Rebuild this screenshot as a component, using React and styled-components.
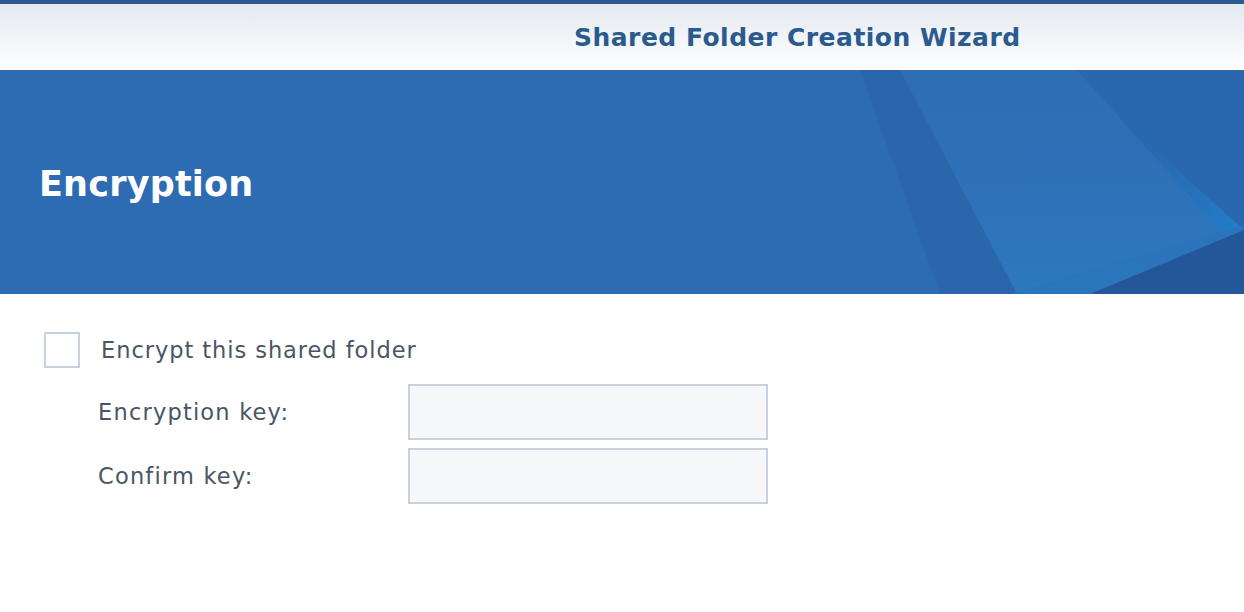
import React from "react";
import styled, { createGlobalStyle } from "styled-components";

const Global = createGlobalStyle`
  html, body {
    margin: 0;
    padding: 0;
    background: #ffffff;
    font-family: "DejaVu Sans", Verdana, sans-serif;
  }
`;

const Page = styled.div`
  width: 1244px;
  height: 612px;
  overflow: hidden;
  background: #ffffff;
  display: flex;
  flex-direction: column;
`;

const TitleBar = styled.header`
  height: 66px;
  border-top: 4px solid #2a5a8e;
  background: linear-gradient(to bottom, #e3e9f1, #ffffff);
  display: flex;
  align-items: center;
  padding-left: 574px;
`;

const WizardTitle = styled.h1`
  margin: 0;
  font-size: 25px;
  font-weight: bold;
  color: #2a5a8e;
  letter-spacing: 0.48px;
`;

const Banner = styled.section`
  position: relative;
  height: 224px;
  background: #2d6cb2;
  display: flex;
  align-items: center;
  padding-left: 39px;
  overflow: hidden;
`;

const BannerArt = styled.svg`
  position: absolute;
  inset: 0;
  width: 100%;
  height: 100%;
`;

const StepTitle = styled.h2`
  position: relative;
  margin: 4px 0 0;
  font-size: 35px;
  font-weight: bold;
  color: #ffffff;
  letter-spacing: 0.2px;
`;

const Body = styled.main`
  padding: 38px 0 0 44px;
  display: flex;
  flex-direction: column;
`;

const CheckRow = styled.label`
  display: flex;
  align-items: center;
  gap: 21px;
  margin-bottom: 16px;
`;

const Box = styled.span`
  width: 32px;
  height: 32px;
  border: 2px solid #c8d2de;
  background: #ffffff;
`;

const Text = styled.span`
  font-size: 22.5px;
  letter-spacing: 0.95px;
  color: #4a5563;
`;

const Fields = styled.div`
  display: grid;
  grid-template-columns: 310px 360px;
  row-gap: 8px;
  padding-left: 54px;
`;

const FieldLabel = styled.span`
  font-size: 22.5px;
  letter-spacing: 1.2px;
  color: #4a5563;
  align-self: center;
`;

const Input = styled.div`
  height: 52px;
  border: 2px solid #c8d2de;
  background: #f5f7f9;
`;

export default function App() {
  return (
    <Page>
      <Global />
      <TitleBar>
        <WizardTitle>Shared Folder Creation Wizard</WizardTitle>
      </TitleBar>
      <Banner>
        <BannerArt viewBox="0 0 1244 224" preserveAspectRatio="none">
          <defs>
            <linearGradient id="lite" x1="0" y1="0" x2="1" y2="1">
              <stop offset="0" stopColor="#2a66ad" stopOpacity="0" />
              <stop offset="1" stopColor="#1f86d2" stopOpacity="0.9" />
            </linearGradient>
            <linearGradient id="mid" x1="0" y1="0" x2="0" y2="1">
              <stop offset="0" stopColor="#2f70b8" stopOpacity="0.3" />
              <stop offset="1" stopColor="#2e7cc2" stopOpacity="0.8" />
            </linearGradient>
          </defs>
          <polygon points="860,0 900,0 1017,224 940,224" fill="#2a62a8" opacity="0.6" />
          <polygon points="900,0 1244,0 1244,224 1017,224" fill="url(#mid)" />
          <polygon points="1077,0 1244,0 1244,187" fill="#2967ae" />
          <polygon points="1100,30 1244,160 1244,187" fill="url(#lite)" />
          <polygon points="1010,224 1244,155 1244,224" fill="#2a74bd" opacity="0.8" />
          <polygon points="1090,224 1244,160 1244,224" fill="#24579a" />
        </BannerArt>
        <StepTitle>Encryption</StepTitle>
      </Banner>
      <Body>
        <CheckRow>
          <Box />
          <Text>Encrypt this shared folder</Text>
        </CheckRow>
        <Fields>
          <FieldLabel>Encryption key:</FieldLabel>
          <Input />
          <FieldLabel>Confirm key:</FieldLabel>
          <Input />
        </Fields>
      </Body>
    </Page>
  );
}
